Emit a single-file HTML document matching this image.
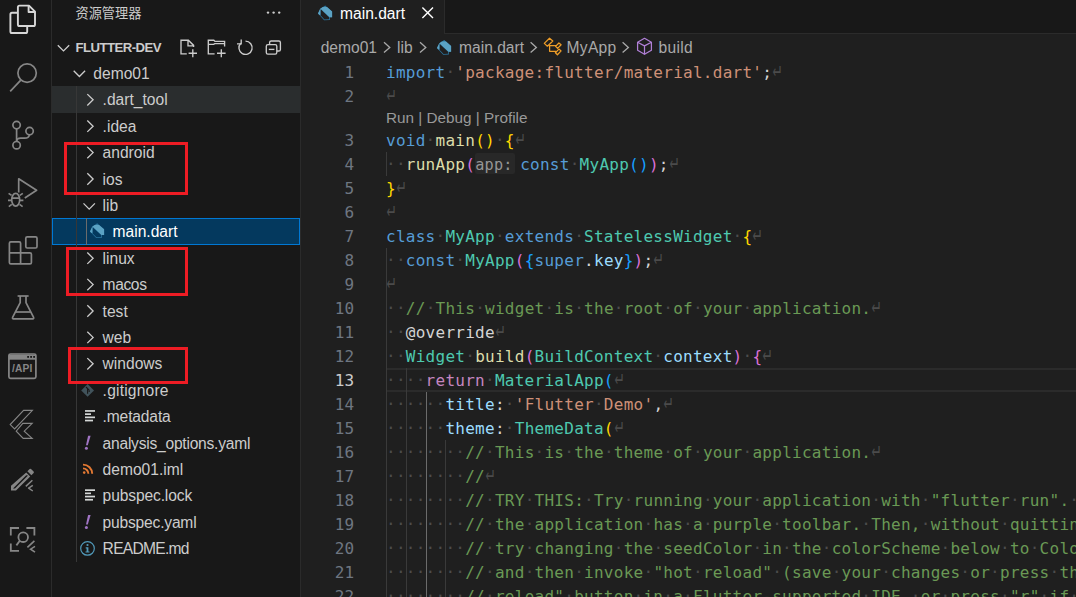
<!DOCTYPE html>
<html lang="zh-CN">
<head>
<meta charset="utf-8">
<title>main.dart - flutter-dev</title>
<style>
*{box-sizing:border-box;margin:0;padding:0}
html,body{width:1076px;height:597px;overflow:hidden;background:#1f1f1f}
body{position:relative;font-family:"Liberation Sans","Noto Sans CJK SC",sans-serif;color:#ccc;font-size:15.6px}
#ab{position:absolute;left:0;top:0;width:52px;height:597px;background:#181818;border-right:1px solid #2b2b2b}
#sb{position:absolute;left:52px;top:0;width:249px;height:597px;background:#181818;border-right:1px solid #2b2b2b;overflow:hidden}
#ed{position:absolute;left:301px;top:0;width:775px;height:597px;background:#1f1f1f;overflow:hidden}
svg{position:absolute;left:0;top:0;overflow:visible}
/* sidebar */
.ttl{position:absolute;left:23.5px;top:4px;font-size:13.2px;line-height:20px;color:#ccc;white-space:nowrap}
.hdr{position:absolute;left:23.5px;top:38px;font-size:13.2px;font-weight:bold;line-height:20px;color:#ccc;white-space:nowrap;letter-spacing:-0.55px}
.row{position:absolute;left:0;width:248px;height:26.4px;line-height:26.4px;white-space:nowrap;color:#ccc}
.row span{position:absolute}
.hov{background:#2a2d2e}
.sel{background:#04395e;outline:1px solid #0078d4;outline-offset:-1px;color:#fff}
.tg{position:absolute;width:1px;background:#373737}
.rb{position:absolute;border:3px solid #ed1c24}
/* editor */
#tabs{position:absolute;left:0;top:0;width:775px;height:34px;background:#181818;border-bottom:1px solid #2b2b2b}
#tab{position:absolute;left:0;top:0;width:143.5px;height:34px;background:#1f1f1f;border-right:1px solid #2b2b2b;color:#fff}
#tab span{position:absolute;left:39px;top:4px;line-height:20px;white-space:nowrap}
.bc{position:absolute;top:37.5px;line-height:20px;color:#a9a9a9;white-space:nowrap}
.ln{position:absolute;left:301px;width:53.5px;text-align:right;height:24px;line-height:24px;font-family:"DejaVu Sans Mono","Liberation Mono",monospace;font-size:16px;letter-spacing:0.268px;color:#6e7681}
.ln.cur{color:#ccc}
.cl{position:absolute;left:386px;height:24px;line-height:24px;font-family:"DejaVu Sans Mono","Liberation Mono",monospace;font-size:16px;letter-spacing:0.268px;white-space:pre;color:#d4d4d4}
.cl i{font-style:normal}
.w{color:#4c4c4c;position:relative;top:-1px}
.e{color:#4b4b4b;font-family:"DejaVu Sans Mono",monospace;font-size:16px;letter-spacing:0;display:inline-block;width:10px;height:24px;vertical-align:top;transform-origin:0 0;transform:translate(0.5px,-10px) scale(0.87,1.48)}
.k{color:#569cd6}.s{color:#ce9178}.f{color:#dcdcaa}.t{color:#4ec9b0}.v{color:#9cdcfe}.c{color:#6a9955}.r{color:#c586c0}
.b1{color:#ffd700}.b2{color:#da70d6}.b3{color:#179fff}
.hint{display:inline-block;vertical-align:top;height:21px;line-height:24px;margin:0 5.4px 0 0;padding:0 2px 0 0;background:#282828;color:#969696;font-size:15.2px;border-radius:2px}
.g{position:absolute;width:1px;background:#3a3a3a}
.ga{background:#6b6b6b}
.lens{position:absolute;left:85px;top:108.3px;height:20px;line-height:20px;font-size:15.3px;color:#999;white-space:nowrap}
.clh{position:absolute;left:86px;top:368px;width:689px;height:24px;border-top:2px solid #2b2b2b;border-bottom:2px solid #2b2b2b}
</style>
</head>
<body>
<div id="ab">
<svg width="52" height="597" fill="none" stroke="#868686" stroke-width="1.7" stroke-linejoin="round" stroke-linecap="butt">
<!-- explorer (active) -->
<g stroke="#d7d7d7" stroke-width="1.9">
<path d="M19.5,5.6 H29 L35,11.6 V24.4 A1.6,1.6 0 0 1 33.4,26 H19.5 A1.6,1.6 0 0 1 17.9,24.4 V7.2 A1.6,1.6 0 0 1 19.5,5.6 Z"/>
<path d="M28.6,5.8 V12 H34.8"/>
<path d="M17.6,12.8 H12 A1.6,1.6 0 0 0 10.4,14.4 V31.4 A1.6,1.6 0 0 0 12,33 H25.6 A1.6,1.6 0 0 0 27.2,31.4 V26.4"/>
</g>
<!-- search -->
<circle cx="27.1" cy="73.1" r="9.2"/>
<path d="M20.8,80.2 L10.2,91.4"/>
<!-- scm -->
<circle cx="16.6" cy="125.1" r="3.7"/>
<circle cx="29.6" cy="131.1" r="3.7"/>
<circle cx="16.6" cy="145.2" r="3.7"/>
<path d="M16.6,128.8 V141.5"/>
<path d="M29.4,134.8 C29,137.4 27.4,138.2 24.6,138.2 H20.6 C18.2,138.2 16.8,139.2 16.6,141.4"/>
<!-- debug -->
<path d="M18.7,192.4 V178.8 L36.6,190.2 L24.8,198"/>
<g stroke-width="1.7">
<ellipse cx="15.7" cy="199.8" rx="4" ry="6.4"/>
<path d="M11.8,198.2 H19.6 M11.6,195.4 L8.6,193.4 M11.4,200.4 H8 M11.8,204.4 L8.8,206.6 M19.8,195.4 L22.8,193.4 M20,200.4 H23.4 M19.6,204.4 L22.6,206.6"/>
</g>
<!-- extensions -->
<path d="M20.6,252.8 V243.2 A1.4,1.4 0 0 0 19.2,241.8 H10.8 A1.4,1.4 0 0 0 9.4,243.2 V262.4 A1.4,1.4 0 0 0 10.8,263.8 H30 A1.4,1.4 0 0 0 31.4,262.4 V254.2 A1.4,1.4 0 0 0 30,252.8 H9.4 M20.6,252.8 V263.8"/>
<rect x="25.8" y="236.8" width="11.2" height="11.2" rx="1.4"/>
<!-- testing flask -->
<path d="M17.6,296 H28.6"/>
<path d="M20.2,296 V302.6 L12.6,317.4 A0.9,0.9 0 0 0 13.4,318.8 H32.8 A0.9,0.9 0 0 0 33.6,317.4 L26,302.6 V296"/>
<path d="M15.6,312 H30.6"/>
<!-- api -->
<rect x="8.9" y="354" width="27" height="24.4" rx="1.6"/>
<path d="M9,357.2 H36" stroke-width="5"/>
<g fill="#181818" stroke="none"><rect x="27.2" y="356" width="1.8" height="1.8"/><rect x="30.2" y="356" width="1.8" height="1.8"/><rect x="33.2" y="356" width="1.8" height="1.8"/></g>
<text x="12" y="372.4" font-family="Liberation Sans, sans-serif" font-weight="bold" font-size="10.2" fill="#868686" stroke="none" letter-spacing="0.2">/API</text>
<!-- flutter -->
<g stroke-width="1.1" stroke-linejoin="miter">
<path d="M23.6,410.4 H32.4 L14.6,429 L10.2,424.6 Z"/>
<path d="M22.8,423.4 H32.2 L24.2,431.2 L32.2,438.4 H23.2 L16.2,431.2 Z"/>
</g>
<!-- pencil -->
<g fill="#868686" stroke="none">
<path d="M26.2,472.4 L30.2,476.4 L16,490.6 H11 V485.8 Z M26.2,475.2 L13,488.6 H15 L28,475.4 Z" fill-rule="evenodd"/>
<path d="M27.4,471.2 L29.6,469 A1,1 0 0 1 31,469 L33.6,471.6 A1,1 0 0 1 33.6,473 L31.4,475.2 Z"/>
</g>
<path d="M25.8,486.4 L32.4,480.2 M32.8,485.4 L28.6,488.2 L32.8,491" stroke-width="1.5"/>
<!-- scan search -->
<g stroke-width="1.8" stroke-linejoin="miter">
<path d="M10.8,535.4 V528 H19 M26.4,528 H34.4 V535.4 M10.8,543.4 V550.8 H19"/>
<circle cx="23.2" cy="537.2" r="4.8"/>
<path d="M19.8,540.8 L16.4,545.4"/>
<path d="M27.4,547.4 L34.4,540.8 M35,546.4 L30.6,549.2 L35,552.2" stroke-width="1.6"/>
</g>
</svg>

</div>
<div id="sb">
<div class="ttl">资源管理器</div>
<div class="hdr">FLUTTER-DEV</div>
<div class="row" style="top:60px;height:26px"><span style="left:41.3px;top:1.0px">demo01</span></div>
<div class="row hov" style="top:86px;height:27px"><span style="left:50.6px;top:1.4px">.dart_tool</span></div>
<div class="row" style="top:113px;height:26px"><span style="left:50.6px;top:0.8px">.idea</span></div>
<div class="row" style="top:139px;height:27px"><span style="left:50.6px;top:1.2px">android</span></div>
<div class="row" style="top:166px;height:26px"><span style="left:50.6px;top:0.6px">ios</span></div>
<div class="row" style="top:192px;height:26px"><span style="left:50.6px;top:1.0px">lib</span></div>
<div class="row sel" style="top:218px;height:27px"><span style="left:60.5px;top:1.4px">main.dart</span></div>
<div class="row" style="top:245px;height:26px"><span style="left:50.6px;top:0.8px">linux</span></div>
<div class="row" style="top:271px;height:27px"><span style="left:50.6px;top:1.2px;letter-spacing:-0.4px">macos</span></div>
<div class="row" style="top:298px;height:26px"><span style="left:50.6px;top:0.6px">test</span></div>
<div class="row" style="top:324px;height:26px"><span style="left:50.6px;top:1.0px">web</span></div>
<div class="row" style="top:350px;height:27px"><span style="left:50.6px;top:1.4px">windows</span></div>
<div class="row" style="top:377px;height:26px"><span style="left:50.6px;top:0.8px;letter-spacing:0.2px">.gitignore</span></div>
<div class="row" style="top:403px;height:27px"><span style="left:50.6px;top:1.2px;letter-spacing:-0.15px">.metadata</span></div>
<div class="row" style="top:430px;height:26px"><span style="left:50.6px;top:0.6px;letter-spacing:-0.24px">analysis_options.yaml</span></div>
<div class="row" style="top:456px;height:26px"><span style="left:50.6px;top:1.0px">demo01.iml</span></div>
<div class="row" style="top:482px;height:27px"><span style="left:50.6px;top:1.4px;letter-spacing:-0.13px">pubspec.lock</span></div>
<div class="row" style="top:509px;height:26px"><span style="left:50.6px;top:0.8px;letter-spacing:-0.2px">pubspec.yaml</span></div>
<div class="row" style="top:535px;height:27px"><span style="left:50.6px;top:1.2px;letter-spacing:-0.72px">README.md</span></div>
<div class="tg" style="left:24px;top:86px;height:476px"></div>
<div class="tg" style="left:34px;top:218px;height:27px;background:#6b6b6b"></div>
<div class="rb" style="left:12.0px;top:142.0px;width:124.0px;height:53.0px"></div>
<div class="rb" style="left:14.0px;top:247.0px;width:122.0px;height:49.0px"></div>
<div class="rb" style="left:16.0px;top:347.0px;width:120.0px;height:37.0px"></div>
<svg width="249" height="597"><g transform="translate(-52,0)">
<path d="M73.7,70.8 L79.4,76.5 L85.1,70.8" fill="none" stroke="#ccc" stroke-width="1.3"/>
<path d="M87.3,94.1 L93.1,99.8 L87.3,105.5" fill="none" stroke="#ccc" stroke-width="1.3"/>
<path d="M87.3,120.5 L93.1,126.2 L87.3,131.9" fill="none" stroke="#ccc" stroke-width="1.3"/>
<path d="M87.3,146.9 L93.1,152.6 L87.3,158.3" fill="none" stroke="#ccc" stroke-width="1.3"/>
<path d="M87.3,173.3 L93.1,179.0 L87.3,184.7" fill="none" stroke="#ccc" stroke-width="1.3"/>
<path d="M83.5,203.4 L89.2,209.1 L94.9,203.4" fill="none" stroke="#ccc" stroke-width="1.3"/>
<g transform="translate(97.0,230.5)"><path d="M0.2,-7.2 L7.1,-1.2 L7.1,4.6 L4.9,4.6 L4.9,7.3 L-0.8,7.6 L-7,0.9 L-4.8,-3.8 Z" fill="#2c76a0"/><path d="M-4.7,-3.9 L-2.2,-5.6 L2,-5.6 L7.1,-1.2 L7.1,4.6 L4.4,4.6 Z M-7,0.9 L-4.8,-3.8 L-4.3,-3.3 L-4.3,2 L-5.6,2.4 Z" fill="#5ba2c3"/><path d="M-4.3,-3.3 L4.1,4.6 L4.1,6.6 L-0.5,6.8 L-4.3,2.9 Z" fill="#04395e"/></g>
<path d="M87.3,252.5 L93.1,258.2 L87.3,263.9" fill="none" stroke="#ccc" stroke-width="1.3"/>
<path d="M87.3,278.9 L93.1,284.6 L87.3,290.3" fill="none" stroke="#ccc" stroke-width="1.3"/>
<path d="M87.3,305.3 L93.1,311.0 L87.3,316.7" fill="none" stroke="#ccc" stroke-width="1.3"/>
<path d="M87.3,331.7 L93.1,337.4 L87.3,343.1" fill="none" stroke="#ccc" stroke-width="1.3"/>
<path d="M87.3,358.1 L93.1,363.8 L87.3,369.5" fill="none" stroke="#ccc" stroke-width="1.3"/>
<g transform="translate(87.6,390.4)"><path d="M0,-6.4 L6.4,0 L0,6.4 L-6.4,0 Z" fill="#41535b"/><path d="M-1.6,-3.4 L1.6,-0.2 M0,-1.8 V3.4 M1.6,-0.2 V1.6" stroke="#181818" stroke-width="1.1" fill="none"/></g>
<g transform="translate(90.0,415.7)" fill="#d4d7d6"><rect x="-5" y="-5.6" width="10" height="1.7"/><rect x="-5" y="-2.4" width="6" height="1.7"/><rect x="-5" y="0.8" width="10" height="1.7"/><rect x="-5" y="4" width="8" height="1.7"/></g>
<g transform="translate(87.5,442.8)" fill="#a074c4"><path d="M0.6,-7 L3.1,-7 L0.3,2.5 L-1.5,2.5 Z"/><circle cx="-1.1" cy="5.4" r="1.5"/></g>
<g transform="translate(83.0,473.8)" fill="none" stroke="#e37933" stroke-width="1.9"><circle cx="1.2" cy="-1.2" r="1.3" fill="#e37933" stroke="none"/><path d="M0,-5.4 A5.4,5.4 0 0 1 5.4,0"/><path d="M0,-9.2 A9.2,9.2 0 0 1 9.2,0"/></g>
<g transform="translate(90.0,494.9)" fill="#d4d7d6"><rect x="-5" y="-5.6" width="10" height="1.7"/><rect x="-5" y="-2.4" width="6" height="1.7"/><rect x="-5" y="0.8" width="10" height="1.7"/><rect x="-5" y="4" width="8" height="1.7"/></g>
<g transform="translate(87.5,522.0)" fill="#a074c4"><path d="M0.6,-7 L3.1,-7 L0.3,2.5 L-1.5,2.5 Z"/><circle cx="-1.1" cy="5.4" r="1.5"/></g>
<g transform="translate(87.5,548.4)"><circle r="6.8" fill="none" stroke="#519aba" stroke-width="1.2"/><circle cx="0" cy="-3.4" r="1.1" fill="#519aba"/><path d="M-1.8,-1.2 H0.9 V3 H2 V4.2 H-2 V3 H-0.9 V0 H-1.8 Z" fill="#519aba"/></g>
<path d="M57.8,45.2 L63.5,50.9 L69.2,45.2" fill="none" stroke="#ccc" stroke-width="1.3"/>

<g fill="none" stroke="#ccc" stroke-width="1.35">
<!-- more -->
<g fill="#ccc" stroke="none"><circle cx="268" cy="12.6" r="1.2"/><circle cx="273.6" cy="12.6" r="1.2"/><circle cx="279.2" cy="12.6" r="1.2"/></g>
<!-- new file -->
<path d="M193.6,47 V45.4 L188.4,40.2 H181 V53.8 H186.8 M188,40.4 V45.8 H193.4"/>
<path d="M192.8,49.2 V57.2 M188.6,53.2 H197"/>
<!-- new folder -->
<path d="M214.6,53.8 H208.3 V40.2 H213.8 L215,41.4 H224.6 V46.6 M208.3,44.4 H213.6 L214.8,43.6 H224.6"/>
<path d="M221.3,49.2 V57.2 M217,53.2 H225.6"/>
<!-- refresh -->
<path d="M240.8,43.2 A6.6,6.6 0 1 0 245.5,41.2"/>
<path d="M241.2,39.6 V43.8 H237"/>
<!-- collapse all -->
<rect x="266.3" y="44.6" width="10.5" height="9.6" rx="1.6"/>
<path d="M269.6,44.4 V42.6 A1.6,1.6 0 0 1 271.2,41 H278.8 A1.6,1.6 0 0 1 280.4,42.6 V49.4 A1.6,1.6 0 0 1 278.8,51 H277"/>
<path d="M268.8,49.4 H274.4"/>
</g>

</g></svg>

</div>
<div id="ed">
<div id="tabs"></div>
<div id="tab"><span>main.dart</span></div>
<svg width="775" height="60"><g transform="translate(-301,0)">
<!-- tab dart icon -->
<g transform="translate(325,12.6)"><path d="M0.2,-7.2 L7.1,-1.2 L7.1,4.6 L4.9,4.6 L4.9,7.3 L-0.8,7.6 L-7,0.9 L-4.8,-3.8 Z" fill="#2c76a0"/><path d="M-4.7,-3.9 L-2.2,-5.6 L2,-5.6 L7.1,-1.2 L7.1,4.6 L4.4,4.6 Z M-7,0.9 L-4.8,-3.8 L-4.3,-3.3 L-4.3,2 L-5.6,2.4 Z" fill="#5ba2c3"/><path d="M-4.3,-3.3 L4.1,4.6 L4.1,6.6 L-0.5,6.8 L-4.3,2.9 Z" fill="#1f1f1f"/></g>
<!-- close -->
<path d="M422.4,7.4 L433,18 M433,7.4 L422.4,18" stroke="#fff" stroke-width="1.4" fill="none"/>
<!-- breadcrumb chevrons -->
<g fill="none" stroke="#a9a9a9" stroke-width="1.3">
<path d="M384,42.2 L389.8,47.4 L384,52.6"/>
<path d="M420,42.2 L425.8,47.4 L420,52.6"/>
<path d="M530.6,42.2 L536.4,47.4 L530.6,52.6"/>
<path d="M622.6,42.2 L628.4,47.4 L622.6,52.6"/>
</g>
<!-- bc dart icon -->
<g transform="translate(444,47.2)"><path d="M0.2,-7.2 L7.1,-1.2 L7.1,4.6 L4.9,4.6 L4.9,7.3 L-0.8,7.6 L-7,0.9 L-4.8,-3.8 Z" fill="#2c76a0"/><path d="M-4.7,-3.9 L-2.2,-5.6 L2,-5.6 L7.1,-1.2 L7.1,4.6 L4.4,4.6 Z M-7,0.9 L-4.8,-3.8 L-4.3,-3.3 L-4.3,2 L-5.6,2.4 Z" fill="#5ba2c3"/><path d="M-4.3,-3.3 L4.1,4.6 L4.1,6.6 L-0.5,6.8 L-4.3,2.9 Z" fill="#1f1f1f"/></g>
<!-- class icon -->
<g fill="none" stroke="#ee9d28" stroke-width="1.25" stroke-linejoin="round">
<path d="M549.5,38.2 L552.8,41 L547.4,46.2 L544.3,43.4 Z"/>
<path d="M549.6,45 V51.3 H556 M549.6,45.7 H556.2"/>
<path d="M558.9,43 L561.1,44.8 L557.6,48.4 L555.6,46.4 Z"/>
<path d="M558.9,49.1 L561.1,50.9 L557.4,54.8 L555.4,52.8 Z"/>
</g>
<!-- method cube icon -->
<g fill="none" stroke="#b180d7" stroke-width="1.25" stroke-linejoin="round">
<path d="M644.5,38.3 L651.4,42.2 V50.2 L644.5,54.3 L637.6,50.2 V42.2 Z"/>
<path d="M637.6,42.2 L644.5,45.9 L651.4,42.2 M644.5,45.9 V54.3"/>
</g>
</g></svg>
<div class="bc" style="left:19.7px">demo01</div>
<div class="bc" style="left:96px">lib</div>
<div class="bc" style="left:158px">main.dart</div>
<div class="bc" style="left:265.5px;letter-spacing:0.3px">MyApp</div>
<div class="bc" style="left:357.6px;letter-spacing:0.3px">build</div>

<div class="clh"></div>
<div class="lens">Run | Debug | Profile</div>
<div id="code" style="position:absolute;left:-301px;top:0">
<div class="g" style="left:386.0px;top:151.7px;height:24.0px"></div>
<div class="g" style="left:386.0px;top:247.7px;height:349.3px"></div>
<div class="g" style="left:405.8px;top:367.7px;height:229.3px"></div>
<div class="g ga" style="left:425.6px;top:391.7px;height:205.3px"></div>
<div class="g" style="left:445.4px;top:439.7px;height:157.3px"></div>
<div class="ln" style="top:61.3px">1</div>
<div class="cl" style="top:61.3px"><span class="k">import</span><i class="w">·</i><span class="s">'package:flutter/material.dart'</span>;<i class="e">↵</i></div>
<div class="ln" style="top:85.3px">2</div>
<div class="cl" style="top:85.3px"><i class="e">↵</i></div>
<div class="ln" style="top:129.3px">3</div>
<div class="cl" style="top:129.3px"><span class="k">void</span><i class="w">·</i><span class="f">main</span><span class="b1">()</span><i class="w">·</i><span class="b1">{</span><i class="e">↵</i></div>
<div class="ln" style="top:153.3px">4</div>
<div class="cl" style="top:153.3px"><i class="w">··</i><span class="f">runApp</span><span class="b2">(</span><span class="hint">app:</span><span class="k">const</span><i class="w">·</i><span class="t">MyApp</span><span class="b3">()</span><span class="b2">)</span>;<i class="e">↵</i></div>
<div class="ln" style="top:177.3px">5</div>
<div class="cl" style="top:177.3px"><span class="b1">}</span><i class="e">↵</i></div>
<div class="ln" style="top:201.3px">6</div>
<div class="cl" style="top:201.3px"><i class="e">↵</i></div>
<div class="ln" style="top:225.3px">7</div>
<div class="cl" style="top:225.3px"><span class="k">class</span><i class="w">·</i><span class="t">MyApp</span><i class="w">·</i><span class="k">extends</span><i class="w">·</i><span class="t">StatelessWidget</span><i class="w">·</i><span class="b1">{</span><i class="e">↵</i></div>
<div class="ln" style="top:249.3px">8</div>
<div class="cl" style="top:249.3px"><i class="w">··</i><span class="k">const</span><i class="w">·</i><span class="t">MyApp</span><span class="b2">(</span><span class="b3">{</span><span class="k">super</span>.<span class="v">key</span><span class="b3">}</span><span class="b2">)</span>;<i class="e">↵</i></div>
<div class="ln" style="top:273.3px">9</div>
<div class="cl" style="top:273.3px"><i class="e">↵</i></div>
<div class="ln" style="top:297.3px">10</div>
<div class="cl" style="top:297.3px"><i class="w">··</i><span class="c">//</span><i class="w">·</i><span class="c">This</span><i class="w">·</i><span class="c">widget</span><i class="w">·</i><span class="c">is</span><i class="w">·</i><span class="c">the</span><i class="w">·</i><span class="c">root</span><i class="w">·</i><span class="c">of</span><i class="w">·</i><span class="c">your</span><i class="w">·</i><span class="c">application.</span><i class="e">↵</i></div>
<div class="ln" style="top:321.3px">11</div>
<div class="cl" style="top:321.3px"><i class="w">··</i>@override<i class="e">↵</i></div>
<div class="ln" style="top:345.3px">12</div>
<div class="cl" style="top:345.3px"><i class="w">··</i><span class="t">Widget</span><i class="w">·</i><span class="f">build</span><span class="b2">(</span><span class="t">BuildContext</span><i class="w">·</i><span class="v">context</span><span class="b2">)</span><i class="w">·</i><span class="b2">{</span><i class="e">↵</i></div>
<div class="ln cur" style="top:369.3px">13</div>
<div class="cl" style="top:369.3px"><i class="w">····</i><span class="r">return</span><i class="w">·</i><span class="t">MaterialApp</span><span class="b3">(</span><i class="e">↵</i></div>
<div class="ln" style="top:393.3px">14</div>
<div class="cl" style="top:393.3px"><i class="w">······</i><span class="v">title</span>:<i class="w">·</i><span class="s">'Flutter</span><i class="w">·</i><span class="s">Demo'</span>,<i class="e">↵</i></div>
<div class="ln" style="top:417.3px">15</div>
<div class="cl" style="top:417.3px"><i class="w">······</i><span class="v">theme</span>:<i class="w">·</i><span class="t">ThemeData</span><span class="b1">(</span><i class="e">↵</i></div>
<div class="ln" style="top:441.3px">16</div>
<div class="cl" style="top:441.3px"><i class="w">········</i><span class="c">//</span><i class="w">·</i><span class="c">This</span><i class="w">·</i><span class="c">is</span><i class="w">·</i><span class="c">the</span><i class="w">·</i><span class="c">theme</span><i class="w">·</i><span class="c">of</span><i class="w">·</i><span class="c">your</span><i class="w">·</i><span class="c">application.</span><i class="e">↵</i></div>
<div class="ln" style="top:465.3px">17</div>
<div class="cl" style="top:465.3px"><i class="w">········</i><span class="c">//</span><i class="e">↵</i></div>
<div class="ln" style="top:489.3px">18</div>
<div class="cl" style="top:489.3px"><i class="w">········</i><span class="c">//</span><i class="w">·</i><span class="c">TRY</span><i class="w">·</i><span class="c">THIS:</span><i class="w">·</i><span class="c">Try</span><i class="w">·</i><span class="c">running</span><i class="w">·</i><span class="c">your</span><i class="w">·</i><span class="c">application</span><i class="w">·</i><span class="c">with</span><i class="w">·</i><span class="c">"flutter</span><i class="w">·</i><span class="c">run".</span><i class="w">·</i><span class="c">You'll</span><i class="w">·</i><span class="c">see</span></div>
<div class="ln" style="top:513.3px">19</div>
<div class="cl" style="top:513.3px"><i class="w">········</i><span class="c">//</span><i class="w">·</i><span class="c">the</span><i class="w">·</i><span class="c">application</span><i class="w">·</i><span class="c">has</span><i class="w">·</i><span class="c">a</span><i class="w">·</i><span class="c">purple</span><i class="w">·</i><span class="c">toolbar.</span><i class="w">·</i><span class="c">Then,</span><i class="w">·</i><span class="c">without</span><i class="w">·</i><span class="c">quitting</span><i class="w">·</i><span class="c">the</span><i class="w">·</i><span class="c">app,</span></div>
<div class="ln" style="top:537.3px">20</div>
<div class="cl" style="top:537.3px"><i class="w">········</i><span class="c">//</span><i class="w">·</i><span class="c">try</span><i class="w">·</i><span class="c">changing</span><i class="w">·</i><span class="c">the</span><i class="w">·</i><span class="c">seedColor</span><i class="w">·</i><span class="c">in</span><i class="w">·</i><span class="c">the</span><i class="w">·</i><span class="c">colorScheme</span><i class="w">·</i><span class="c">below</span><i class="w">·</i><span class="c">to</span><i class="w">·</i><span class="c">Colors.green</span></div>
<div class="ln" style="top:561.3px">21</div>
<div class="cl" style="top:561.3px"><i class="w">········</i><span class="c">//</span><i class="w">·</i><span class="c">and</span><i class="w">·</i><span class="c">then</span><i class="w">·</i><span class="c">invoke</span><i class="w">·</i><span class="c">"hot</span><i class="w">·</i><span class="c">reload"</span><i class="w">·</i><span class="c">(save</span><i class="w">·</i><span class="c">your</span><i class="w">·</i><span class="c">changes</span><i class="w">·</i><span class="c">or</span><i class="w">·</i><span class="c">press</span><i class="w">·</i><span class="c">the</span><i class="w">·</i><span class="c">"hot</span></div>
<div class="ln" style="top:585.3px">22</div>
<div class="cl" style="top:585.3px"><i class="w">········</i><span class="c">//</span><i class="w">·</i><span class="c">reload"</span><i class="w">·</i><span class="c">button</span><i class="w">·</i><span class="c">in</span><i class="w">·</i><span class="c">a</span><i class="w">·</i><span class="c">Flutter-supported</span><i class="w">·</i><span class="c">IDE,</span><i class="w">·</i><span class="c">or</span><i class="w">·</i><span class="c">press</span><i class="w">·</i><span class="c">"r"</span><i class="w">·</i><span class="c">if</span><i class="w">·</i><span class="c">you</span><i class="w">·</i><span class="c">used</span></div>
</div>
</div>
</body>
</html>
